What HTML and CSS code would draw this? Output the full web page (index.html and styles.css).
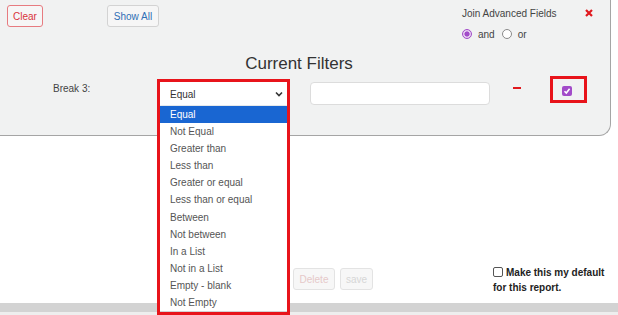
FILE: index.html
```html
<!DOCTYPE html>
<html lang="en">
  <head>
    <meta charset="UTF-8" />
    <meta name="viewport" content="width=device-width, initial-scale=1.0" />
    <title>Report Filters</title>
    <link rel="stylesheet" href="styles.css">
  </head>
  <body>
    <div class="panel">
      <div class="top-row">
        <button class="btn btn-clear">Clear</button>
        <button class="btn btn-show">Show All</button>
        <div class="join">
          <div class="join-title">
            <span>Join Advanced Fields</span>
            <svg class="close" width="8" height="8" viewBox="0 0 8 8">
              <path d="M1 1L7 7M7 1L1 7" stroke="#e0191e" stroke-width="2.2" />
            </svg>
          </div>
          <div class="join-radios">
            <span class="radio checked"></span><span class="radio-label">and</span>
            <span class="radio"></span><span class="radio-label">or</span>
          </div>
        </div>
      </div>

      <h2 class="title">Current Filters</h2>

      <div class="filter-row">
        <span class="label">Break 3:</span>
        <div class="select-wrap">
          <div class="select">
            <span>Equal</span>
            <svg width="8" height="6" viewBox="0 0 8 6">
              <path d="M1 1.5L4 4.5L7 1.5" fill="none" stroke="#333" stroke-width="1.6" />
            </svg>
          </div>
          <ul class="dropdown">
            <li class="selected">Equal</li>
            <li>Not Equal</li>
            <li>Greater than</li>
            <li>Less than</li>
            <li>Greater or equal</li>
            <li>Less than or equal</li>
            <li>Between</li>
            <li>Not between</li>
            <li>In a List</li>
            <li>Not in a List</li>
            <li>Empty - blank</li>
            <li>Not Empty</li>
          </ul>
          <div class="highlight"></div>
        </div>
        <input class="value" type="text" />
        <span class="minus"></span>
        <div class="check-frame">
          <span class="check">
            <svg width="10" height="10" viewBox="0 0 10 10">
              <path d="M2.5 5.2L4.3 7L7.6 2.8" fill="none" stroke="#fff" stroke-width="1.6" />
            </svg>
          </span>
        </div>
      </div>
    </div>

    <div class="content"></div>

    <div class="actions">
      <button class="btn btn-disabled">Delete</button>
      <button class="btn btn-disabled btn-save">save</button>
      <label class="default">
        <span class="box"></span>Make this my default for this report.
      </label>
    </div>

    <div class="band"></div>
  </body>
</html>
```

FILE: styles.css
```css
body {
  font-family: "Liberation Sans", Arial, sans-serif;
  font-size: 10px;
  color: #333;
  margin: 0;
  width: 618px;
  height: 315px;
  overflow: hidden;
  background: #fff;
}
.panel {
  width: 610px;
  height: 135px;
  background-color: #f1f2f2;
  border-right: 1px solid #a5a5a5;
  border-bottom: 1px solid #a5a5a5;
  border-bottom-right-radius: 12px;
}
.top-row {
  display: flex;
  align-items: flex-start;
  padding: 5px 0 0 7px;
}
.btn {
  font-family: inherit;
  font-size: 10px;
  height: 22px;
  padding: 0;
  border-radius: 3px;
  background: #f6f6f6;
  cursor: pointer;
}
.btn-clear {
  width: 36px;
  border: 1px solid #e77b80;
  color: #d9343b;
}
.btn-show {
  width: 52px;
  margin-left: 64px;
  border: 1px solid #d3d3d3;
  color: #2f6fb5;
}
.join {
  margin-left: 303px;
  flex-shrink: 0;
  white-space: nowrap;
}
.join-title {
  display: flex;
  align-items: center;
  height: 16px;
  color: #444;
}
.close {
  margin-left: 28px;
}
.join-radios {
  display: flex;
  align-items: center;
  height: 16px;
  margin-top: 5px;
  color: #444;
}
.radio {
  width: 10px;
  height: 10px;
  box-sizing: border-box;
  border: 1px solid #8a8a8a;
  border-radius: 50%;
  background: #fff;
}
.radio.checked {
  border-color: #a24bc9;
  background: radial-gradient(circle, #a24bc9 0 2.3px, #e6cdf0 2.8px);
}
.radio-label {
  margin: 0 7px 0 6px;
}
.title {
  margin: 12px 12px 0 0;
  font-size: 17px;
  font-weight: normal;
  line-height: 20px;
  text-align: center;
  color: #333;
}
.filter-row {
  display: flex;
  align-items: flex-start;
  margin-top: 5px;
}
.label {
  width: 104px;
  margin-left: 53px;
  padding-top: 3px;
  line-height: 14px;
  color: #444;
}
.select-wrap {
  position: relative;
  width: 127px;
  margin: 3px 0 0 3px;
}
.select {
  display: flex;
  align-items: center;
  justify-content: space-between;
  height: 23px;
  padding: 1px 4px 0 10px;
  box-sizing: border-box;
  background: #fff;
  box-shadow: 0 0 2px #cfd6de;
}
.dropdown {
  position: absolute;
  top: 24px;
  left: 0;
  width: 127px;
  margin: 0;
  padding: 0;
  list-style: none;
  background: #fff;
  z-index: 2;
}
.dropdown li {
  height: 17.1px;
  line-height: 17px;
  padding-left: 10px;
  color: #555;
}
.dropdown li.selected {
  background-color: #1966d2;
  color: #fff;
}
.highlight {
  position: absolute;
  left: -3px;
  top: -3px;
  width: 127px;
  height: 230px;
  border: 3px solid #e8141b;
  z-index: 3;
}
.value {
  width: 180px;
  height: 23px;
  box-sizing: border-box;
  margin: 3px 0 0 23px;
  border: 1px solid #dcdcdc;
  border-radius: 4px;
  background: #fff;
}
.minus {
  width: 8px;
  height: 2px;
  margin: 8px 0 0 23px;
  background: #e0191e;
}
.check-frame {
  width: 31px;
  height: 21px;
  margin: -3px 0 0 29px;
  padding: 0;
  border: 3px solid #e8141b;
  display: flex;
  align-items: flex-start;
}
.check {
  width: 10px;
  height: 10px;
  margin: 7px 0 0 9px;
  border-radius: 2px;
  background: #a24bc9;
  display: flex;
}
.content {
  height: 129px;
}
.actions {
  display: flex;
  align-items: flex-start;
  height: 38px;
  padding-left: 293px;
}
.btn-disabled {
  width: 42px;
  height: 22px;
  margin-top: 3px;
  border: 1px solid #e3e3e3;
  background: #f7f7f7;
  color: #e6c9c9;
}
.btn-save {
  width: 33px;
  margin-left: 5px;
  color: #d6d6d6;
}
.default {
  width: 116px;
  margin-left: 120px;
  line-height: 15px;
  font-weight: bold;
  color: #222;
}
.box {
  display: inline-block;
  width: 10px;
  height: 10px;
  box-sizing: border-box;
  margin-right: 3px;
  vertical-align: -1px;
  border: 1px solid #555;
  border-radius: 2px;
  background: #fff;
}
.band {
  height: 9px;
  background: #d3d3d3;
  border-bottom: 4px solid #eeeeee;
}
```
